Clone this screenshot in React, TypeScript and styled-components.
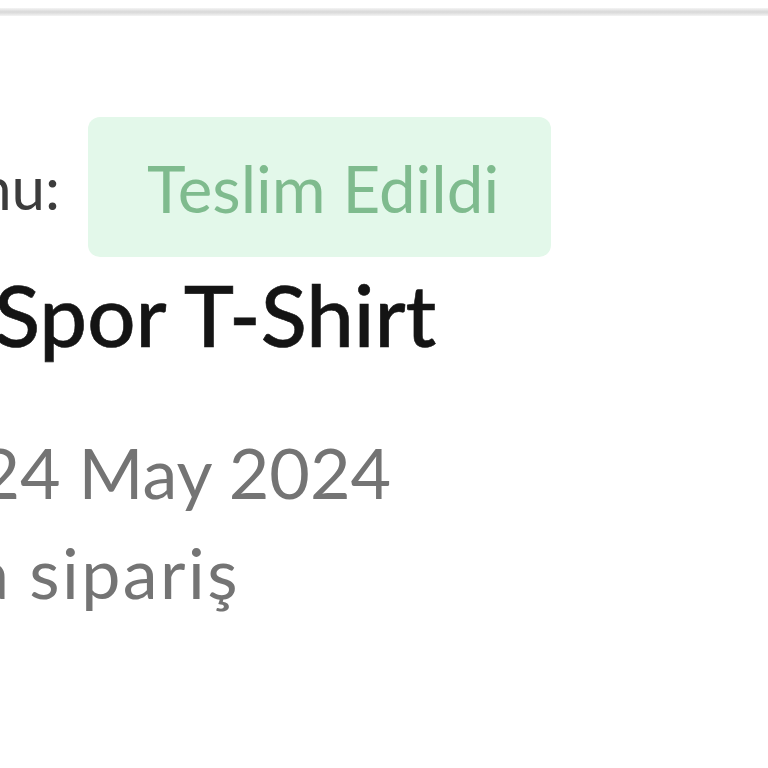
import React from "react";
import styled, { createGlobalStyle } from "styled-components";

const Global = createGlobalStyle`
  html, body { margin: 0; padding: 0; background: #ffffff; overflow: hidden; }
  body { font-family: Lato, "Open Sans", "DejaVu Sans", sans-serif; }
`;

const Page = styled.div`
  width: 768px;
  height: 768px;
  overflow: hidden;
  background: #ffffff;
  display: flex;
  flex-direction: column;
`;

const TopRule = styled.div`
  margin-top: 8px;
  height: 8px;
  background: linear-gradient(
    to bottom,
    #f4f4f4 0%,
    #e2e2e2 30%,
    #d8d8d8 50%,
    #e2e2e2 70%,
    #f4f4f4 100%
  );
`;

const Content = styled.div`
  display: flex;
  flex-direction: column;
  padding-top: 101px;
`;

const StatusRow = styled.div`
  display: flex;
  align-items: center;
  height: 140px;
`;

const Clipped = styled.span<{ $w: number }>`
  display: inline-flex;
  justify-content: flex-end;
  width: ${(p) => p.$w}px;
  overflow: hidden;
  white-space: nowrap;
  flex: none;
`;

const Label = styled.div`
  display: flex;
  font-size: 60px;
  color: #3c3c3c;
  white-space: nowrap;
`;

const Badge = styled.div`
  margin-left: 28px;
  height: 140px;
  box-sizing: border-box;
  padding: 0 52px 0 59px;
  display: flex;
  align-items: center;
  border-radius: 12px;
  background: #e3f8ea;
  color: #7fbb8e;
  font-size: 65.5px;
  white-space: nowrap;
`;

const Title = styled.div`
  margin-top: 7px;
  margin-left: -6px;
  font-size: 85px;
  line-height: 100px;
  font-weight: 500;
  color: #141414;
  white-space: nowrap;
  -webkit-text-stroke: 0.6px #141414;
`;

const Meta = styled.div<{ $gap?: number }>`
  display: flex;
  margin-top: ${(p) => p.$gap ?? 0}px;
  font-size: 70px;
  line-height: 100px;
  color: #747474;
  white-space: nowrap;
`;

const Word = styled.span<{ $track?: number }>`
  letter-spacing: ${(p) => p.$track ?? 0}px;
`;

export default function App() {
  return (
    <>
      <Global />
      <Page>
        <TopRule />
        <Content>
          <StatusRow>
            <Label>
              <Clipped $w={60}>Sipariş Durumu:</Clipped>
            </Label>
            <Badge>Teslim Edildi</Badge>
          </StatusRow>
          <Title>Spor T-Shirt</Title>
          <Meta $gap={58}>
            <Clipped $w={20}>Sipariş Tarihi: 2</Clipped>
            <Word>4 May 2024</Word>
          </Meta>
          <Meta>
            <Clipped $w={9}>Mobil uygulamada</Clipped>
            <Word $track={2.4}>&nbsp;sipariş</Word>
          </Meta>
        </Content>
      </Page>
    </>
  );
}
